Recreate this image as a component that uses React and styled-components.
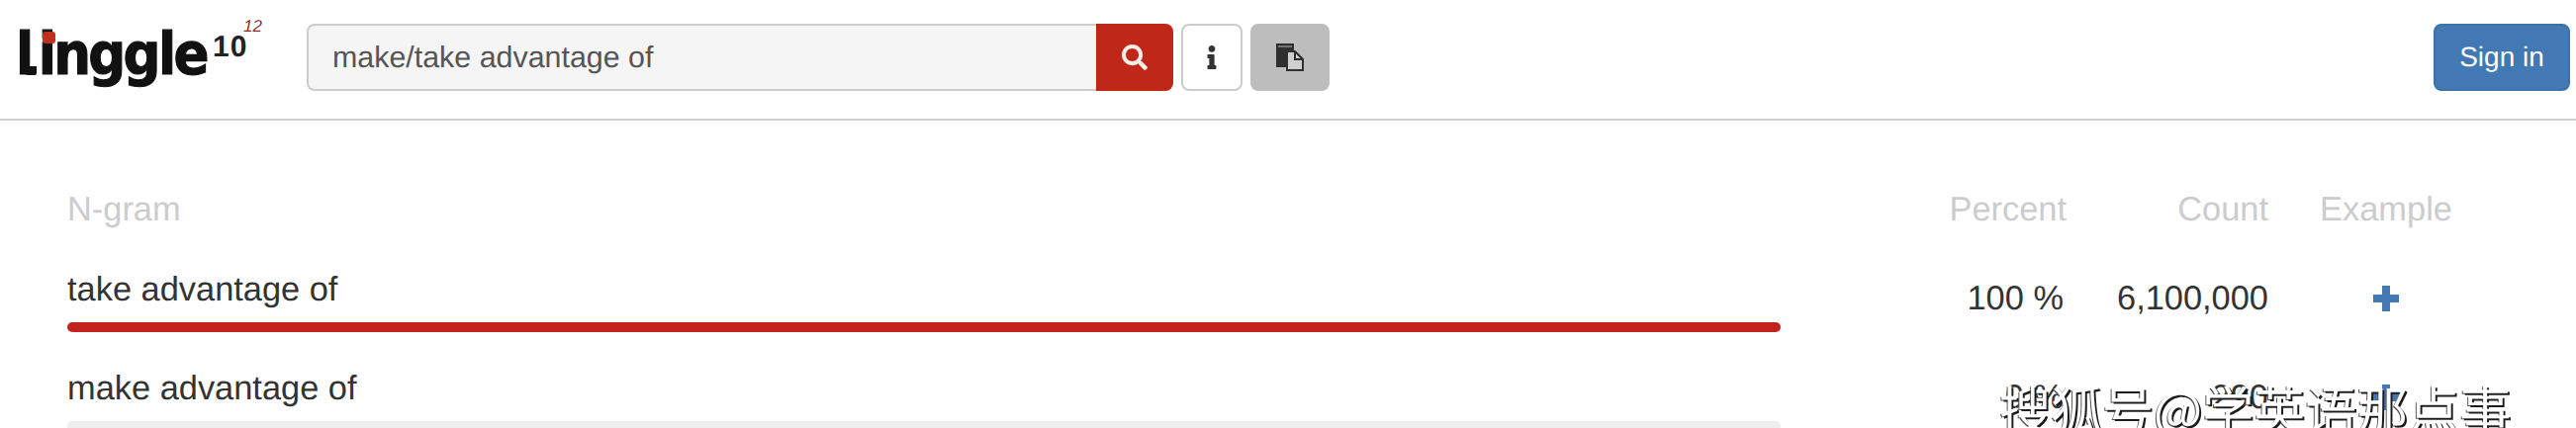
import React from 'react';
import styled, { createGlobalStyle } from 'styled-components';
import { FaSearch, FaInfo } from 'react-icons/fa';

const GlobalStyle = createGlobalStyle`
  html, body {
    margin: 0;
    padding: 0;
    background: #fff;
    overflow: hidden;
  }
  body {
    font-family: "Liberation Sans", Arial, sans-serif;
    color: #333;
    text-rendering: geometricPrecision;
  }
`;

const Page = styled.div`
  position: relative;
  width: 2604px;
  height: 433px;
  overflow: hidden;
`;

const Navbar = styled.header`
  box-sizing: border-box;
  height: 122px;
  display: flex;
  align-items: flex-start;
  padding: 24px 6px 0 20px;
  border-bottom: 2px solid #d0d0d0;
`;

const Logo = styled.div`
  position: relative;
  flex: 0 0 290px;
  height: 68px;
`;

const LogoWord = styled.span`
  position: absolute;
  left: -4px;
  top: -3px;
  font-family: "DejaVu Sans", sans-serif;
  font-size: 59px;
  line-height: 68px;
  font-weight: 700;
  letter-spacing: -3px;
  color: #111;
  -webkit-text-stroke: 1.2px #111;
  transform: scaleX(0.9);
  transform-origin: left center;
`;

const LogoFirstLetter = styled.span`
  letter-spacing: 5px;
`;

const LogoTail = styled.span`
  position: absolute;
  left: 0;
  top: 43px;
  width: 17px;
  height: 9px;
  border-radius: 0 0 2px 10px;
  background: #111;
`;

const LogoDot = styled.span`
  position: absolute;
  left: 23px;
  top: 8px;
  width: 13px;
  height: 12px;
  border-radius: 3px;
  background: #c0301f;
`;

const LogoTen = styled.span`
  position: absolute;
  left: 195px;
  top: 9px;
  font-size: 30px;
  line-height: 30px;
  font-weight: 700;
  letter-spacing: 1px;
  color: #222;
`;

const LogoTwelve = styled.span`
  position: absolute;
  left: 226px;
  top: -6px;
  font-size: 17px;
  line-height: 18px;
  font-style: italic;
  color: #8e2a2a;
`;

const SearchGroup = styled.form`
  display: flex;
  margin: 0;
`;

const SearchInput = styled.input`
  box-sizing: border-box;
  width: 798px;
  height: 68px;
  padding: 0 24px;
  border: 2px solid #ccc;
  border-right: 0;
  border-radius: 8px 0 0 8px;
  background: #f5f5f5;
  font-family: inherit;
  font-size: 30.4px;
  color: #555;
  outline: none;
  text-rendering: geometricPrecision;
`;

const SearchButton = styled.button`
  width: 78px;
  height: 68px;
  padding: 0;
  border: 0;
  border-radius: 0 8px 8px 0;
  background: #bf2718;
  color: #fbeee8;
  display: flex;
  align-items: center;
  justify-content: center;
`;

const ToolButton = styled.button`
  box-sizing: border-box;
  width: ${(p) => (p.$active ? '80px' : '62px')};
  height: 68px;
  margin-left: 8px;
  padding: 0;
  border: 2px solid ${(p) => (p.$active ? '#bdbdbd' : '#ccc')};
  border-radius: 8px;
  background: ${(p) => (p.$active ? '#bdbdbd' : '#fff')};
  color: #333;
  display: flex;
  align-items: center;
  justify-content: center;
`;

const SignIn = styled.button`
  box-sizing: border-box;
  width: 138px;
  height: 68px;
  margin-left: auto;
  padding: 0;
  border: 2px solid #3d72a8;
  border-radius: 8px;
  background: #4279b4;
  color: #fff;
  font-family: inherit;
  font-size: 28px;
  text-rendering: geometricPrecision;
`;

const Table = styled.main`
  padding: 70px 0 0 68px;
  display: grid;
  grid-template-columns: 1732px 289px 204px 238px;
  grid-auto-rows: 100px;
  grid-template-rows: 81px;
`;

const HeadCell = styled.div`
  font-size: 34.4px;
  line-height: 40px;
  color: #ccc;
  text-align: ${(p) => p.$align || 'right'};
`;

const NgramCell = styled.div`
  font-size: 34.4px;
  line-height: 40px;
  color: #333;
`;

const Bar = styled.div`
  height: 10px;
  margin-top: 13px;
  border-radius: 5px;
  background: #eee;
  overflow: hidden;
`;

const BarFill = styled.div`
  height: 100%;
  background: #c4221d;
`;

const NumCell = styled.div`
  padding: 9px ${(p) => p.$right || 0}px 0 0;
  font-size: 34.4px;
  line-height: 40px;
  color: #333;
  text-align: right;
`;

const ExampleCell = styled.div`
  padding-top: 16px;
  display: flex;
  justify-content: center;
  align-items: flex-start;
`;

const Watermark = styled.div`
  position: absolute;
  left: 2021px;
  top: 376px;
  font-family: "Noto Sans CJK SC", sans-serif;
  font-size: 52px;
  line-height: 72px;
  white-space: nowrap;
  color: #fff;
  text-shadow: 2px 2px 0 #1c1c1c, -1px 1px 0 #555;
`;

const PlusIcon = () => (
  <svg width="26" height="26" viewBox="0 0 26 26" fill="#4279b4">
    <path d="M9 0h8v9h9v8h-9v9H9v-9H0V9h9z" />
  </svg>
);

const PasteIcon = () => (
  <svg width="30" height="28" viewBox="0 0 30 28">
    <path d="M1 0h18v8h-7v16H1z" fill="#2f2f2f" />
    <path d="M3 3h14" stroke="#8c8c8c" strokeWidth="1.5" />
    <path d="M12 8h8l8 8v11H12z" fill="#cfcfcf" stroke="#2f2f2f" strokeWidth="2" />
    <path d="M20 8v8h8" fill="none" stroke="#2f2f2f" strokeWidth="2" />
  </svg>
);

const rows = [
  { text: 'take advantage of', percent: '100 %', count: '6,100,000', width: 100 },
  { text: 'make advantage of', percent: '0 %', count: '290', width: 0 },
];

export default function App() {
  return (
    <Page>
      <GlobalStyle />
      <Navbar>
        <Logo>
          <LogoWord>
            <LogoFirstLetter>l</LogoFirstLetter>inggle
          </LogoWord>
          <LogoTail />
          <LogoDot />
          <LogoTen>10</LogoTen>
          <LogoTwelve>12</LogoTwelve>
        </Logo>
        <SearchGroup>
          <SearchInput readOnly value="make/take advantage of" />
          <SearchButton type="button">
            <FaSearch size={26} />
          </SearchButton>
        </SearchGroup>
        <ToolButton type="button">
          <FaInfo size={24} />
        </ToolButton>
        <ToolButton type="button" $active>
          <PasteIcon />
        </ToolButton>
        <SignIn type="button">Sign in</SignIn>
      </Navbar>
      <Table>
        <HeadCell $align="left">N-gram</HeadCell>
        <HeadCell>Percent</HeadCell>
        <HeadCell>Count</HeadCell>
        <HeadCell $align="center">Example</HeadCell>
        {rows.map((row) => (
          <React.Fragment key={row.text}>
            <NgramCell>
              {row.text}
              <Bar>
                <BarFill style={{ width: `${row.width}%` }} />
              </Bar>
            </NgramCell>
            <NumCell $right={3}>{row.percent}</NumCell>
            <NumCell>{row.count}</NumCell>
            <ExampleCell>
              <PlusIcon />
            </ExampleCell>
          </React.Fragment>
        ))}
      </Table>
      <Watermark>搜狐号@学英语那点事</Watermark>
    </Page>
  );
}
